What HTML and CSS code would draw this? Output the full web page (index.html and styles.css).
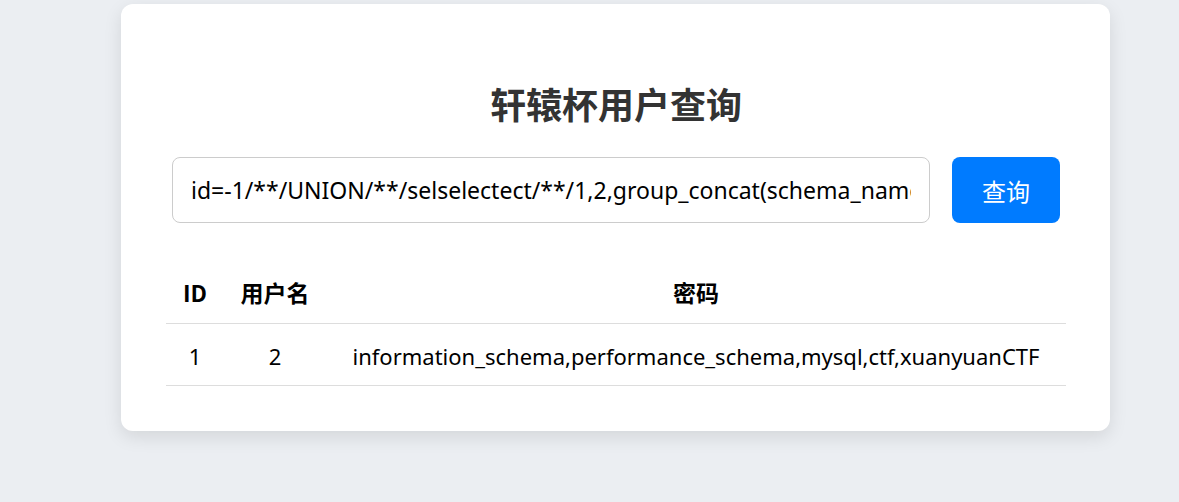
FILE: index.html
```html
<!DOCTYPE html>
<html lang="zh-CN">
<head>
<meta charset="utf-8">
<title>轩辕杯用户查询</title>
<link rel="stylesheet" href="styles.css">
</head>
<body>
<div class="card">
  <h2 class="title">轩辕杯用户查询</h2>
  <form class="search" onsubmit="return false">
    <input class="search-input" type="text" value="id=-1/**/UNION/**/selselectect/**/1,2,group_concat(schema_name)/**/frfromom/**/information_schema.schemata">
    <button class="search-btn" type="submit">查询</button>
  </form>
  <table class="result">
    <colgroup>
      <col class="col-id">
      <col class="col-name">
      <col>
    </colgroup>
    <thead>
      <tr><th>ID</th><th>用户名</th><th>密码</th></tr>
    </thead>
    <tbody>
      <tr><td>1</td><td>2</td><td>information_schema,performance_schema,mysql,ctf,xuanyuanCTF</td></tr>
    </tbody>
  </table>
</div>
</body>
</html>
```

FILE: styles.css
```css
* { box-sizing: border-box; }
html, body { margin: 0; padding: 0; }
body {
  background: #ebeef2;
  font-family: "Noto Sans", "Noto Sans CJK SC", sans-serif;
  color: #000;
  height: 502px;
  overflow: hidden;
}
.card {
  margin: 4px 0 0 121px;
  width: 989px;
  background: #fff;
  border-radius: 12px;
  box-shadow: 0 6px 18px rgba(0, 0, 0, 0.10);
  padding: 45px 44px 45px 45px;
}
.title {
  margin: 31px 0 31px;
  text-align: center;
  font-size: 36px;
  line-height: 46px;
  font-weight: 700;
  color: #333;
  font-family: "Noto Sans CJK SC", sans-serif;
}
.search {
  display: flex;
  gap: 22px;
  margin: 0 6px 0 6px;
}
.search-input {
  flex: 1;
  min-width: 0;
  height: 66px;
  border: 1px solid #ccc;
  border-radius: 8px;
  padding: 0 18px;
  font-size: 23px;
  font-family: "Noto Sans", "Noto Sans CJK SC", sans-serif;
  color: #000;
  outline: none;
}
.search-btn {
  width: 108px;
  height: 66px;
  border: none;
  border-radius: 8px;
  background: #007bff;
  color: #fff;
  font-size: 24px;
  font-family: "Noto Sans CJK SC", sans-serif;
  cursor: pointer;
}
.result {
  width: 100%;
  margin-top: 38px;
  border-collapse: collapse;
  table-layout: fixed;
}
.col-id { width: 58px; }
.col-name { width: 102px; }
.result th, .result td {
  text-align: center;
  height: 62px;
  padding: 0;
  border-bottom: 1px solid #ddd;
  font-size: 22px;
  white-space: nowrap;
}
.result td { padding-top: 3px; }
.result th {
  font-weight: 700;
  font-size: 23px;
  font-family: "Noto Sans CJK SC", sans-serif;
}
```
